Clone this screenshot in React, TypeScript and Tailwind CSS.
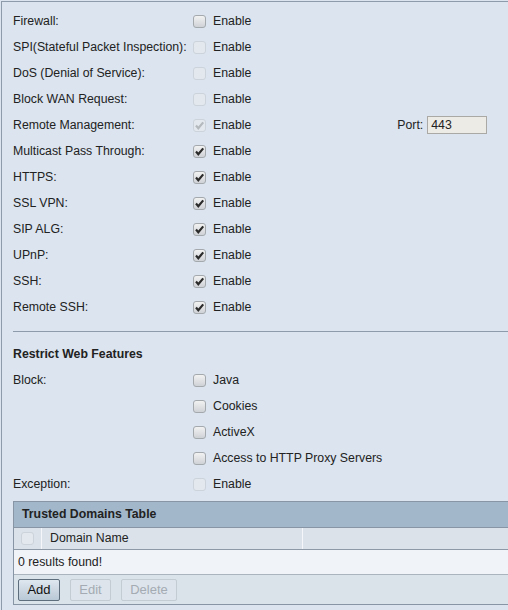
import React from "react";

type BoxProps = { checked?: boolean; disabled?: boolean };

const Box = ({ checked, disabled }: BoxProps) => {
  return (
    <span
      className={`relative inline-block w-[13px] h-[13px] rounded-[3px] border shrink-0 ${
        disabled
          ? "border-[#cdd3da] bg-[#e3e8ee]"
          : "border-[#a4a9ae] bg-gradient-to-b from-[#f2f2f2] to-[#cfd2d6]"
      }`}
    >
      {checked && (
        <svg viewBox="0 0 13 13" className="absolute -left-[1px] -top-[1px] w-[13px] h-[13px]">
          <path
            d="M3 6.6 L5.3 9.2 L10.2 3.4"
            fill="none"
            stroke={disabled ? "#b4b9be" : "#2b2b2b"}
            strokeWidth="2.2"
          />
        </svg>
      )}
    </span>
  );
};

const rows: { label: string; checked?: boolean; disabled?: boolean; port?: boolean }[] = [
  { label: "Firewall:" },
  { label: "SPI(Stateful Packet Inspection):", disabled: true },
  { label: "DoS (Denial of Service):", disabled: true },
  { label: "Block WAN Request:", disabled: true },
  { label: "Remote Management:", checked: true, disabled: true, port: true },
  { label: "Multicast Pass Through:", checked: true },
  { label: "HTTPS:", checked: true },
  { label: "SSL VPN:", checked: true },
  { label: "SIP ALG:", checked: true },
  { label: "UPnP:", checked: true },
  { label: "SSH:", checked: true },
  { label: "Remote SSH:", checked: true },
];

const blocks = ["Java", "Cookies", "ActiveX", "Access to HTTP Proxy Servers"];

export default function App() {
  return (
    <div
      className="w-[508px] h-[610px] overflow-hidden bg-[#dbe4ef] text-[12.3px] text-[#222]"
      style={{ fontFamily: '"Liberation Sans", Arial, sans-serif' }}
    >
      <div className="ml-[1px] mt-[1px] h-[609px] border-l border-t border-[#8e9bab] pt-[6px]">
        {/* settings rows */}
        {rows.map((r) => (
          <div key={r.label} className="flex items-center h-[26px] pl-[11px]">
            <span className="w-[180px] whitespace-nowrap">{r.label}</span>
            <Box checked={r.checked} disabled={r.disabled} />
            <span className="ml-[7px]">Enable</span>
            {r.port && (
              <div className="flex items-center ml-[146px]">
                <span>Port:</span>
                <span className="ml-[4px] w-[60px] h-[18px] border border-[#aaa9a5] bg-[#ecebe6] pl-[3px] leading-[16px]">
                  443
                </span>
              </div>
            )}
          </div>
        ))}

        <div className="ml-[11px] mt-[11px] border-t border-[#8e9bab]" />

        {/* restrict web features */}
        <div className="flex items-center h-[26px] pl-[11px] mt-[9px] font-bold">
          Restrict Web Features
        </div>
        {blocks.map((b, i) => (
          <div key={b} className="flex items-center h-[26px] pl-[11px]">
            <span className="w-[180px]">{i === 0 ? "Block:" : ""}</span>
            <Box />
            <span className="ml-[7px]">{b}</span>
          </div>
        ))}
        <div className="flex items-center h-[26px] pl-[11px]">
          <span className="w-[180px]">Exception:</span>
          <Box disabled />
          <span className="ml-[7px]">Enable</span>
        </div>

        {/* trusted domains table */}
        <div className="ml-[11px] mt-[4px] border-l border-t border-b border-[#8795a4]">
          <div className="h-[26px] flex items-center pl-[8px] bg-[#a2b8ca] font-bold border-b border-[#8795a4]">
            Trusted Domains Table
          </div>
          <div className="h-[22px] flex bg-[#dbe2ea] border-b border-[#8d99a6]">
            <div className="w-[28px] flex items-center justify-center border-r border-[#f4f6f9]">
              <Box disabled />
            </div>
            <div className="w-[261px] flex items-center pl-[8px] border-r border-[#f4f6f9]">
              Domain Name
            </div>
          </div>
          <div className="h-[25px] flex items-center pl-[4px] bg-[#f0f3f8] border-b border-[#a9b4bf]">
            0 results found!
          </div>
          <div className="h-[29px] flex items-center pl-[4px] gap-[10px] bg-[#dae2ea]">
            <button className="w-[42px] h-[22px] rounded-[2px] border border-[#5f6e7c] bg-gradient-to-b from-[#dfe7ef] to-[#b9c8d6] text-[13px] text-[#111]">
              Add
            </button>
            <button className="w-[41px] h-[22px] rounded-[2px] border border-[#c3cbd3] bg-[#dde4ec] text-[13px] text-[#a4abb2]">
              Edit
            </button>
            <button className="w-[56px] h-[22px] rounded-[2px] border border-[#c3cbd3] bg-[#dde4ec] text-[13px] text-[#a4abb2]">
              Delete
            </button>
          </div>
        </div>
      </div>
    </div>
  );
}
